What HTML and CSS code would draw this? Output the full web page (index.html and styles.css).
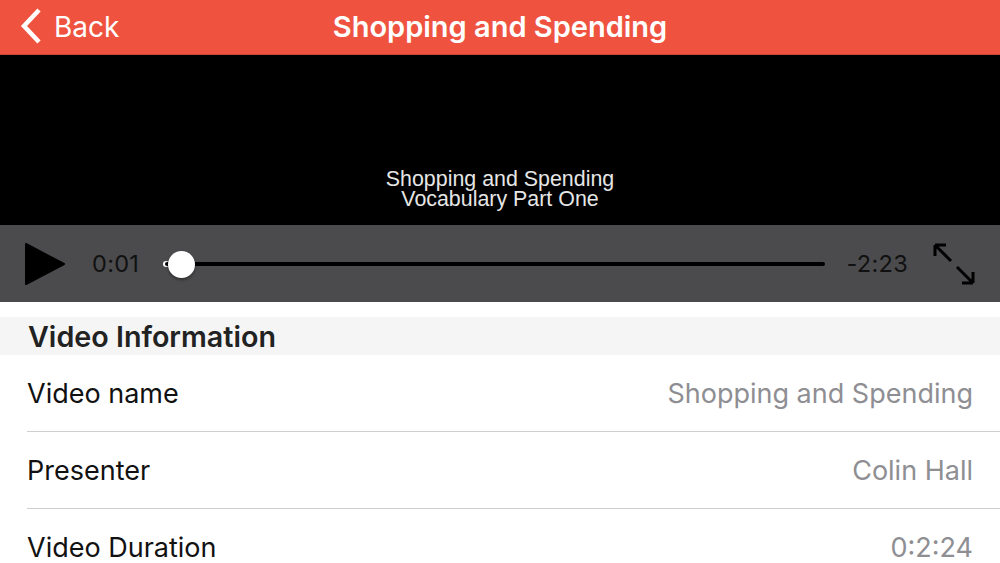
FILE: index.html
```html
<!DOCTYPE html>
<html>
<head>
<meta charset="utf-8">
<link rel="stylesheet" href="styles.css">
</head>
<body>
<div class="app">
  <header class="navbar">
    <div class="back">
      <svg class="chev" width="22" height="36" viewBox="0 0 22 36"><path d="M19 2 L4 18 L19 34" fill="none" stroke="#fff" stroke-width="4.5" stroke-linecap="butt" stroke-linejoin="miter"/></svg>
      <span>Back</span>
    </div>
    <h1 class="title">Shopping and Spending</h1>
  </header>
  <section class="video">
    <div class="caption"><div>Shopping and Spending</div><div>Vocabulary Part One</div></div>
  </section>
  <div class="controls">
    <svg class="play" width="42" height="44" viewBox="0 0 42 44"><path d="M2 2 L40 22 L2 42 Z" fill="#000" stroke="#000" stroke-width="2" stroke-linejoin="round"/></svg>
    <span class="time cur">0:01</span>
    <div class="track">
      <div class="line"></div>
      <div class="thumb"></div>
    </div>
    <span class="time rem">-2:23</span>
    <svg class="expand" width="44" height="44" viewBox="0 0 44 44">
      <path d="M3 3 L19 19 M3 3 L3 14 M3 3 L14 3" fill="none" stroke="#000" stroke-width="3"/>
      <path d="M41 41 L25 25 M41 41 L41 30 M41 41 L30 41" fill="none" stroke="#000" stroke-width="3"/>
    </svg>
  </div>
  <div class="spacer"></div>
  <div class="section-head">Video Information</div>
  <ul class="rows">
    <li class="row"><span class="label">Video name</span><span class="value">Shopping and Spending</span></li>
    <li class="row"><span class="label">Presenter</span><span class="value">Colin Hall</span></li>
    <li class="row"><span class="label">Video Duration</span><span class="value">0:2:24</span></li>
  </ul>
</div>
</body>
</html>
```

FILE: styles.css
```css
* { box-sizing: border-box; }
html, body { margin: 0; padding: 0; }
body {
  width: 1000px;
  height: 563px;
  overflow: hidden;
  background: #fff;
  font-family: Inter, Roboto, "Liberation Sans", sans-serif;
}
.app { display: flex; flex-direction: column; }
.navbar {
  height: 55px;
  background: #ef5340;
  border-bottom: 1px solid #c94535;
  display: flex;
  align-items: center;
  justify-content: center;
  position: relative;
}
.back {
  position: absolute;
  left: 20px;
  top: 8px;
  display: flex;
  align-items: center;
  color: #fff;
  font-size: 28px;
  gap: 12px;
}
.back span { margin-top: 1px; }
.title {
  margin: 0;
  color: #fff;
  font-size: 29px;
  font-weight: 600;
  margin-top: -2px;
}
.video {
  height: 170px;
  background: #000;
  display: flex;
  justify-content: center;
  align-items: flex-end;
  padding-bottom: 16px;
}
.caption {
  color: #e6e6e6;
  font-family: "Liberation Sans", Arial, sans-serif;
  font-size: 21.4px;
  line-height: 20px;
  text-align: center;
}
.controls {
  height: 77px;
  background: #4b4b4d;
  display: flex;
  align-items: center;
  padding-left: 24px;
  padding-right: 24px;
}
.play { flex: none; margin-top: 1px; }
.time {
  font-size: 23.5px;
  color: #111;
  letter-spacing: 0.3px;
}
.cur { margin-left: 26px; }
.track {
  flex: 1;
  position: relative;
  height: 30px;
  margin-left: 24px;
  margin-right: 22px;
}
.line {
  position: absolute;
  left: 2px;
  right: 0;
  top: 13px;
  height: 4px;
  border-radius: 2px;
  background: #000;
}
.thumb {
  position: absolute;
  left: 5px;
  top: 2px;
  width: 27px;
  height: 27px;
  border-radius: 50%;
  background: #fff;
  box-shadow: 0 2px 3px rgba(0,0,0,0.35);
}
.track::before {
  content: "";
  position: absolute;
  left: 0;
  top: 12px;
  width: 6px;
  height: 6px;
  border-radius: 50%;
  background: #fff;
}
.rem { margin-right: 24px; }
.expand { flex: none; margin-top: 1px; }
.spacer { height: 15px; background: #fff; }
.section-head {
  height: 38px;
  background: #f5f5f5;
  padding-left: 28px;
  font-size: 28.7px;
  font-weight: 600;
  color: #222;
  line-height: 40px;
}
.rows { list-style: none; margin: 0; padding: 0 0 0 27px; }
.row {
  height: 77px;
  display: flex;
  align-items: center;
  justify-content: space-between;
  padding-right: 27px;
  border-bottom: 1px solid #cfcfd3;
  font-size: 27px;
}
.label { color: #111; }
.value { color: #8e8e93; }
```
